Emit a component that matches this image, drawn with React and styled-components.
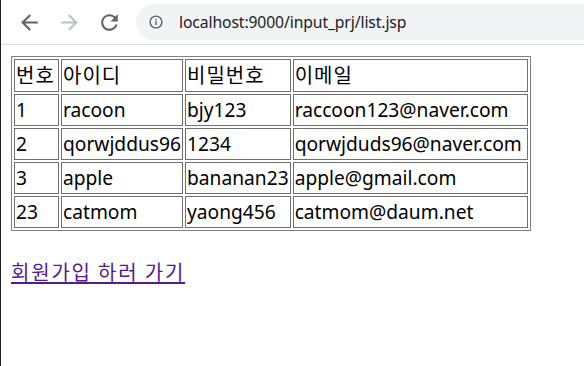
import React from "react";
import styled, { createGlobalStyle } from "styled-components";

const Global = createGlobalStyle`
  html, body { margin: 0; padding: 0; background: #fff; }
  body { width: 584px; height: 366px; overflow: hidden; }
`;

const Frame = styled.div`
  width: 584px;
  height: 366px;
  box-sizing: border-box;
  border-left: 1px solid #1f1f1f;
  display: flex;
  flex-direction: column;
  background: #fff;
`;

const Toolbar = styled.div`
  height: 44px;
  flex: none;
  display: flex;
  align-items: center;
  padding-left: 8px;
  border-bottom: 1px solid #dadce0;
  background: #fff;
`;

const NavButton = styled.div`
  width: 40px;
  height: 36px;
  display: flex;
  align-items: center;
  justify-content: center;
  color: ${(p) => (p.$disabled ? "#bdc1c6" : "#5f6368")};
`;

const Omnibox = styled.div`
  margin-left: 7px;
  flex: 1;
  height: 36px;
  border-radius: 18px 0 0 18px;
  background: #f1f3f4;
  display: flex;
  align-items: center;
  padding-left: 13px;
  gap: 16px;
`;

const UrlText = styled.span`
  font-family: "Noto Sans", "Open Sans", sans-serif;
  font-size: 15.7px;
  color: #202124;
  letter-spacing: -0.1px;
`;

const Content = styled.div`
  padding: 11px 0 0 10px;
  font-family: "Noto Sans", "Noto Sans CJK KR", sans-serif;
  font-size: 19.2px;
  color: #000;
`;

const Hangul = styled.span`
  font-family: "Noto Sans CJK KR", sans-serif;
  font-size: 20px;
  letter-spacing: ${(p) => p.$ls || 0}px;
`;

const Table = styled.table`
  border: 1px solid #808080;
  border-spacing: 2px;
  border-collapse: separate;
  table-layout: fixed;
`;

const Cell = styled.td`
  border: 1px solid #707070;
  padding: 1px;
  width: ${(p) => p.$w}px;
  height: 28px;
  line-height: 28px;
  box-sizing: content-box;
  white-space: nowrap;
  overflow: visible;
  text-align: left;
  font-weight: normal;
`;

const Link = styled.a`
  display: inline-block;
  margin-top: 27px;
  color: #551a8b;
  text-decoration: underline;
  text-decoration-thickness: 2px;
  text-underline-offset: 2px;
  line-height: 28px;
  cursor: pointer;
`;

const widths = [41, 118, 100, 231];
const header = ["번호", "아이디", "비밀번호", "이메일"];
const rows = [
  ["1", "racoon", "bjy123", "raccoon123@naver.com"],
  ["2", "qorwjddus96", "1234", "qorwjduds96@naver.com"],
  ["3", "apple", "bananan23", "apple@gmail.com"],
  ["23", "catmom", "yaong456", "catmom@daum.net"],
];

const BackIcon = () => (
  <svg width="25" height="25" viewBox="0 0 24 24" fill="currentColor">
    <path d="M20 11H7.83l5.59-5.59L12 4l-8 8 8 8 1.41-1.41L7.83 13H20v-2z" />
  </svg>
);
const ForwardIcon = () => (
  <svg width="25" height="25" viewBox="0 0 24 24" fill="currentColor">
    <path d="M12 4l-1.41 1.41L16.17 11H4v2h12.17l-5.58 5.59L12 20l8-8z" />
  </svg>
);
const ReloadIcon = () => (
  <svg width="25" height="25" viewBox="0 0 24 24" fill="currentColor">
    <path d="M17.65 6.35C16.2 4.9 14.21 4 12 4c-4.42 0-7.99 3.58-7.99 8s3.57 8 7.99 8c3.73 0 6.84-2.55 7.73-6h-2.08c-.82 2.33-3.04 4-5.65 4-3.31 0-6-2.69-6-6s2.69-6 6-6c1.66 0 3.14.69 4.22 1.78L13 11h7V4l-2.35 2.35z" />
  </svg>
);
const InfoIcon = () => (
  <svg width="14" height="14" viewBox="0 0 14 14" fill="none">
    <circle cx="7" cy="7" r="5.9" stroke="#5f6368" strokeWidth="1.4" />
    <rect x="6.3" y="6" width="1.4" height="4" fill="#5f6368" />
    <rect x="6.3" y="3.8" width="1.4" height="1.4" fill="#5f6368" />
  </svg>
);

export default function App() {
  return (
    <>
      <Global />
      <Frame>
        <Toolbar>
          <NavButton><BackIcon /></NavButton>
          <NavButton $disabled><ForwardIcon /></NavButton>
          <NavButton><ReloadIcon /></NavButton>
          <Omnibox>
            <InfoIcon />
            <UrlText>localhost:9000/input_prj/list.jsp</UrlText>
          </Omnibox>
        </Toolbar>
        <Content>
          <Table>
            <tbody>
              <tr>
                {header.map((h, i) => (
                  <Cell key={i} $w={widths[i]}>
                    <Hangul $ls={1}>{h}</Hangul>
                  </Cell>
                ))}
              </tr>
              {rows.map((r, ri) => (
                <tr key={ri}>
                  {r.map((c, ci) => (
                    <Cell key={ci} $w={widths[ci]}>{c}</Cell>
                  ))}
                </tr>
              ))}
            </tbody>
          </Table>
          <div>
            <Link>
              <Hangul $ls={1.8}>회원가입 하러 가기</Hangul>
            </Link>
          </div>
        </Content>
      </Frame>
    </>
  );
}
